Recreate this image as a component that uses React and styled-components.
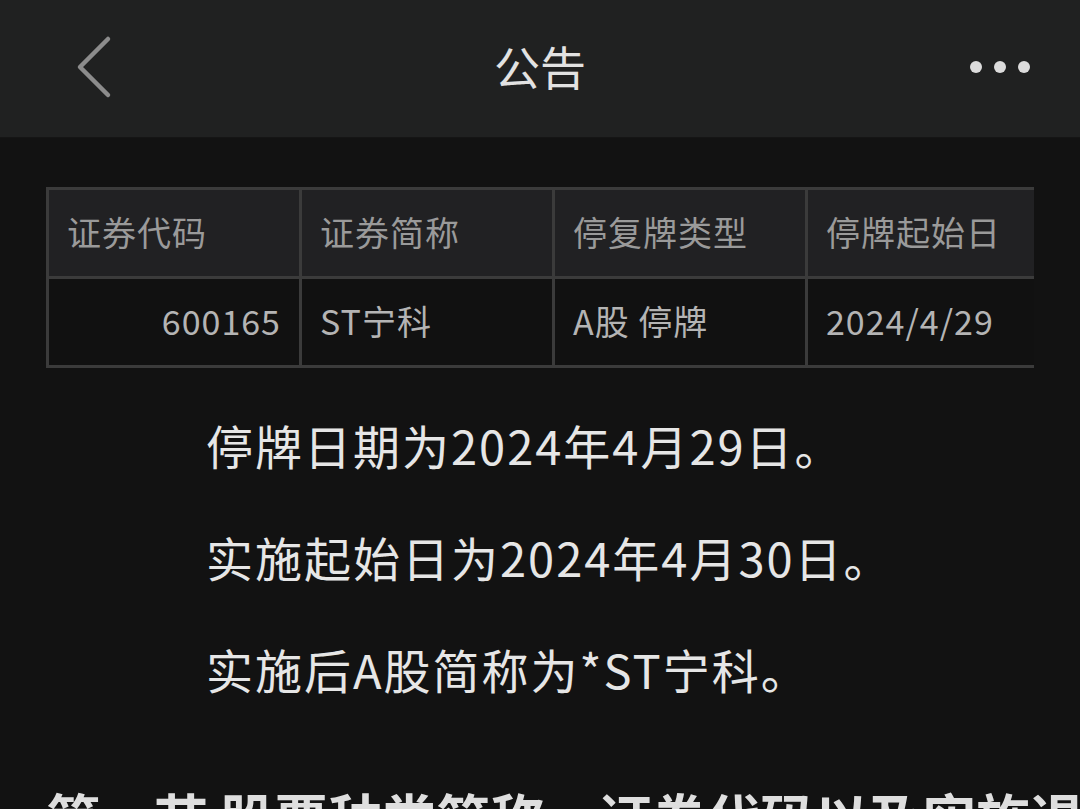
import styled, { createGlobalStyle } from 'styled-components';

const GlobalStyle = createGlobalStyle`
  html, body {
    margin: 0;
    padding: 0;
    background: #121212;
  }
  body {
    font-family: "Noto Sans CJK SC", "Noto Sans", sans-serif;
    overflow: hidden;
  }
  * {
    box-sizing: border-box;
  }
`;

const Page = styled.div`
  width: 1080px;
  height: 809px;
  overflow: hidden;
  background: #121212;
`;

const NavBar = styled.header`
  height: 138px;
  background: #202121;
  display: grid;
  grid-template-columns: 160px 1fr 160px;
  align-items: center;
  border-bottom: 1px solid #151515;
`;

const BackButton = styled.button`
  background: none;
  border: none;
  padding: 0 0 4px 72px;
  display: flex;
  align-items: center;
  height: 100%;
  cursor: pointer;
`;

const Title = styled.h1`
  margin: 0 0 8px;
  text-align: center;
  font-size: 46px;
  font-weight: 400;
  color: #e2e2e2;
`;

const MoreButton = styled.button`
  background: none;
  border: none;
  padding: 0 50px 4px 0;
  display: flex;
  justify-content: flex-end;
  align-items: center;
  gap: 12px;
  height: 100%;
  cursor: pointer;
`;

const Dot = styled.span`
  width: 12px;
  height: 12px;
  border-radius: 50%;
  background: #dcdcdc;
`;

const Content = styled.main`
  padding: 49px 46px 0;
`;

const TableWrap = styled.div`
  overflow: hidden;
`;

const Table = styled.table`
  border-collapse: collapse;
  table-layout: fixed;
  width: 1265px;
  border: 3px solid #3b3b3b;
`;

const Cell = styled.td`
  width: 253px;
  height: 89px;
  padding: 0 18px 4px;
  border: 3px solid #3b3b3b;
  font-size: 34px;
  letter-spacing: 1px;
  white-space: nowrap;
  text-align: ${({ $align }) => $align || 'left'};
  color: ${({ $head }) => ($head ? '#9a9a9a' : '#b4b4b4')};
  background: ${({ $head }) => ($head ? '#212123' : '#111111')};
`;

const Notes = styled.section`
  display: flex;
  flex-direction: column;
  gap: 48px;
  padding: 45px 0 0 160px;
`;

const Line = styled.p`
  margin: 0;
  font-size: 47px;
  line-height: 64px;
  letter-spacing: 2px;
  color: #e6e6e6;
  white-space: nowrap;
`;

const SectionTitle = styled.h2`
  margin: 78px 0 0;
  font-size: 54px;
  line-height: 76px;
  font-weight: 700;
  color: #dedede;
  white-space: nowrap;
`;

const head = ['证券代码', '证券简称', '停复牌类型', '停牌起始日', '停牌期限'];
const row = [
  { text: '600165', align: 'right' },
  { text: 'ST宁科' },
  { text: 'A股 停牌' },
  { text: '2024/4/29' },
  { text: '1天' },
];

export default function App() {
  return (
    <Page>
      <GlobalStyle />
      <NavBar>
        <BackButton aria-label="返回">
          <svg width="40" height="64" viewBox="0 0 40 64">
            <path
              d="M36 4 L8 32 L36 60"
              fill="none"
              stroke="#8c8c8c"
              strokeWidth="4.5"
              strokeLinecap="round"
              strokeLinejoin="round"
            />
          </svg>
        </BackButton>
        <Title>公告</Title>
        <MoreButton aria-label="更多">
          <Dot />
          <Dot />
          <Dot />
        </MoreButton>
      </NavBar>

      <Content>
        <TableWrap>
          <Table>
            <tbody>
              <tr>
                {head.map((h) => (
                  <Cell key={h} $head>
                    {h}
                  </Cell>
                ))}
              </tr>
              <tr>
                {row.map((c) => (
                  <Cell key={c.text} $align={c.align}>
                    {c.text}
                  </Cell>
                ))}
              </tr>
            </tbody>
          </Table>
        </TableWrap>

        <Notes>
          <Line>停牌日期为2024年4月29日。</Line>
          <Line>实施起始日为2024年4月30日。</Line>
          <Line>实施后A股简称为*ST宁科。</Line>
        </Notes>

        <SectionTitle>第一节 股票种类简称、证券代码以及实施退市风险警示的起始日</SectionTitle>
      </Content>
    </Page>
  );
}
